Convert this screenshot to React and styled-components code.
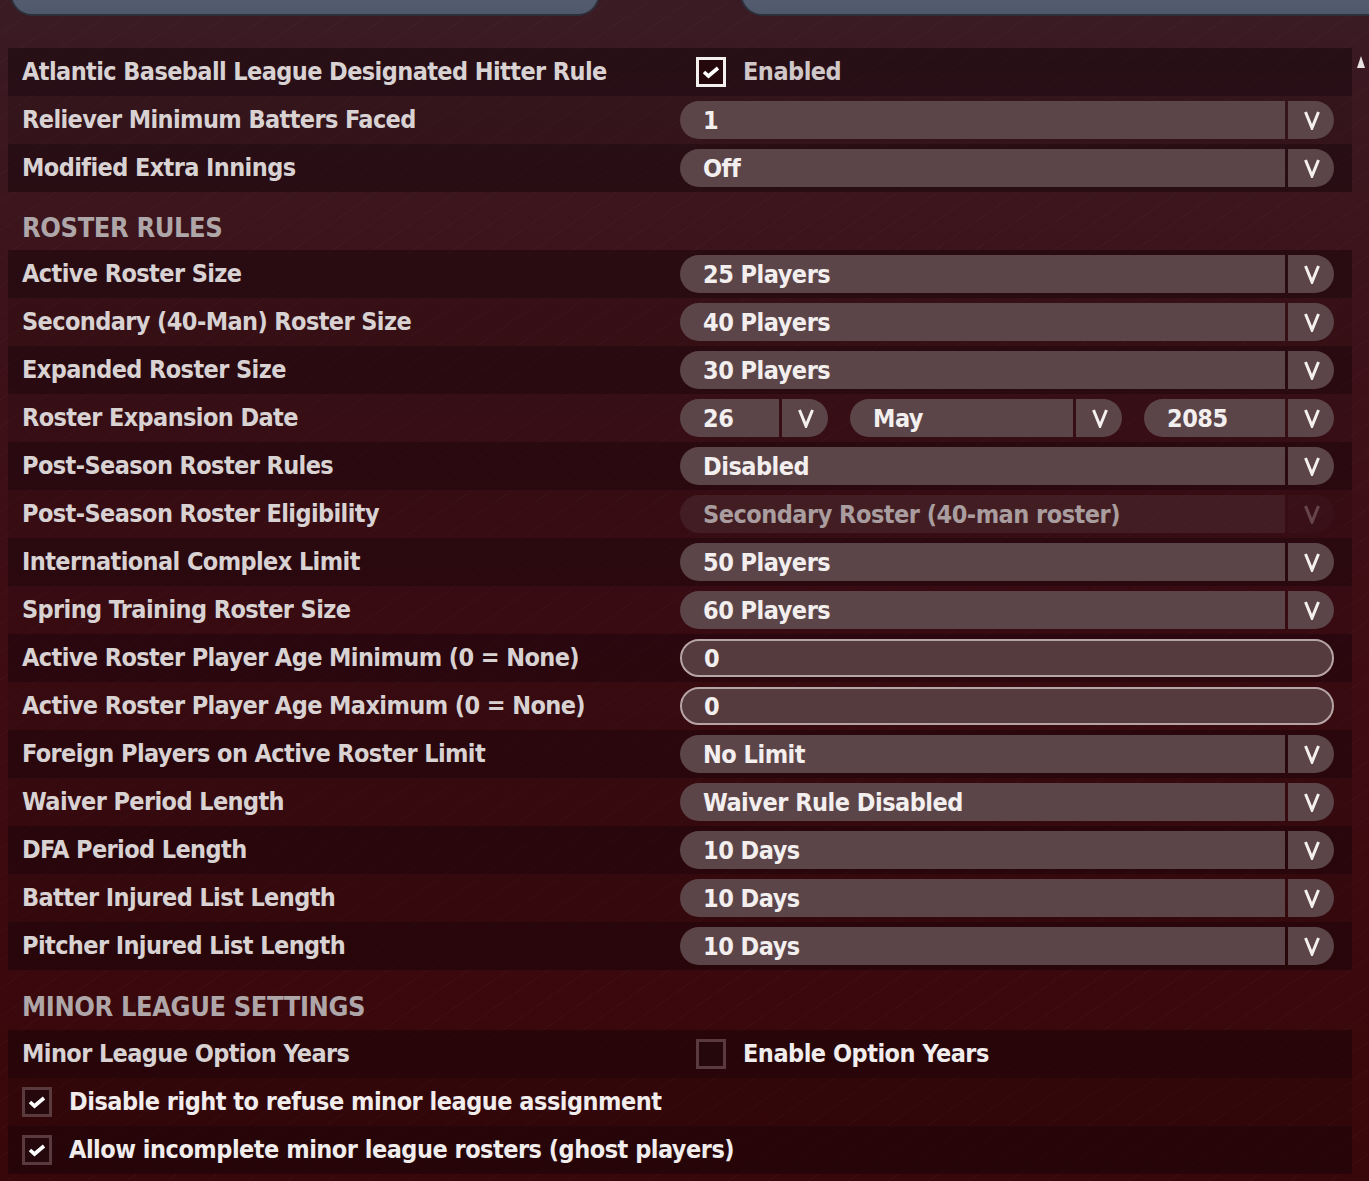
import React from 'react';
import styled, { createGlobalStyle } from 'styled-components';

const GlobalStyle = createGlobalStyle`
  html, body {
    margin: 0;
    padding: 0;
    background: #3a0c12;
  }
  body {
    font-family: "DejaVu Sans Condensed", "DejaVu Sans", "Liberation Sans", sans-serif;
    overflow: hidden;
  }
`;

const Page = styled.div`
  width: 1369px;
  height: 1181px;
  overflow: hidden;
  display: flex;
  flex-direction: column;
  background:
    repeating-linear-gradient(-35deg, rgba(255, 255, 255, 0) 0 22px, rgba(255, 255, 255, 0.018) 22px 23px),
    linear-gradient(180deg, #3a1b24 0%, #3d121a 25%, #3e0c13 55%, #380709 100%);
`;

const TabStrip = styled.div`
  height: 16px;
  display: flex;
  align-items: flex-end;
  overflow: hidden;
  flex-shrink: 0;
`;

const Tab = styled.div`
  height: 60px;
  margin-left: ${p => p.$left}px;
  width: ${p => p.$width}px;
  background: linear-gradient(180deg, #5b6679 0%, #4f596b 100%);
  border: 2px solid #2d2f3a;
  border-top: none;
  border-radius: 0 0 22px 22px;
  box-sizing: border-box;
  flex-shrink: 0;
`;

const Body = styled.div`
  display: flex;
  padding-top: 32px;
`;

const List = styled.div`
  width: 1352px;
  display: flex;
  flex-direction: column;
`;

const Scroll = styled.div`
  flex: 1;
  display: flex;
  justify-content: center;
  padding-top: 8px;
`;

const ScrollArrow = styled.div`
  width: 0;
  height: 0;
  border-left: 4px solid transparent;
  border-right: 4px solid transparent;
  border-bottom: 12px solid #e8e2e2;
`;

const Row = styled.div`
  height: 48px;
  margin-left: 8px;
  padding-left: 14px;
  display: grid;
  grid-template-columns: ${p => (p.$full ? '1fr' : '658px 654px')};
  align-items: center;
  background: ${p => (p.$dark ? 'rgba(15, 2, 6, 0.42)' : 'rgba(20, 4, 8, 0.16)')};
`;

const Label = styled.div`
  color: #d9d2d3;
  font-size: 25px;
  font-weight: 700;
  white-space: nowrap;
  letter-spacing: -0.6px;
  padding-bottom: 2px;
`;

const Header = styled.div`
  height: ${p => p.$h}px;
  padding-left: 22px;
  padding-top: 12px;
  box-sizing: border-box;
  display: flex;
  align-items: center;
  color: #aea6a8;
  font-size: 27px;
  font-weight: 700;
  letter-spacing: -0.4px;
`;

const Controls = styled.div`
  display: flex;
  gap: ${p => p.$gap || 0}px;
  height: 38px;
`;

const Select = styled.div`
  display: flex;
  height: 38px;
  width: ${p => (p.$w ? `${p.$w}px` : '100%')};
`;

const SelectValue = styled.div`
  flex: 1;
  display: flex;
  align-items: center;
  padding-left: ${p => p.$pad || 23}px;
  background: ${p => (p.$disabled ? 'rgba(92, 69, 73, 0.3)' : '#5c4549')};
  border-radius: 19px 0 0 19px;
  color: ${p => (p.$disabled ? '#a99d9f' : '#f3efef')};
  font-size: 25px;
  font-weight: 700;
  letter-spacing: -0.5px;
  box-sizing: border-box;
`;

const SelectButton = styled.div`
  width: 46px;
  margin-left: 3px;
  display: flex;
  align-items: center;
  justify-content: center;
  padding-left: 2px;
  box-sizing: border-box;
  background: ${p => (p.$disabled ? 'rgba(92, 69, 73, 0.3)' : '#5c4549')};
  border-radius: 0 19px 19px 0;
  opacity: ${p => (p.$disabled ? 0.25 : 1)};
`;

const TextInput = styled.div`
  height: 38px;
  width: 100%;
  box-sizing: border-box;
  border: 2px solid #b7a5a6;
  border-radius: 19px;
  background: #553a3e;
  display: flex;
  align-items: center;
  padding-left: 22px;
  color: #f3efef;
  font-size: 25px;
  font-weight: 700;
`;

const CheckWrap = styled.div`
  display: flex;
  align-items: center;
  gap: 17px;
  padding-left: ${p => p.$pad || 0}px;
`;

const Box = styled.div`
  width: 30px;
  height: 30px;
  box-sizing: border-box;
  border: 3px solid ${p => p.$color};
  background: #24080c;
  display: flex;
  align-items: center;
  justify-content: center;
`;

const CheckText = styled.span`
  color: ${p => p.$color || '#f1eded'};
  font-size: 25px;
  font-weight: 700;
  letter-spacing: -0.5px;
  padding-bottom: 1px;
  white-space: nowrap;
`;

const Chevron = () => (
  <svg width="18" height="20" viewBox="0 0 18 20">
    <path d="M2.5 2 L9 18 L15.5 2" fill="none" stroke="#f4f0f0" strokeWidth="3" strokeLinejoin="miter" />
  </svg>
);

const Tick = () => (
  <svg width="18" height="14" viewBox="0 0 18 14">
    <path d="M2 7 L6.5 11 L16 3" fill="none" stroke="#ffffff" strokeWidth="3.6" />
  </svg>
);

function Dropdown({ value, width, pad, disabled }) {
  return (
    <Select $w={width}>
      <SelectValue $pad={pad} $disabled={disabled}>{value}</SelectValue>
      <SelectButton $disabled={disabled}><Chevron /></SelectButton>
    </Select>
  );
}

function Check({ checked, bright, label, textColor, pad }) {
  return (
    <CheckWrap $pad={pad}>
      <Box $color={bright ? '#f4f0f0' : '#5b3a3d'}>{checked && <Tick />}</Box>
      <CheckText $color={textColor}>{label}</CheckText>
    </CheckWrap>
  );
}

const rosterRows = [
  ['Active Roster Size', '25 Players'],
  ['Secondary (40-Man) Roster Size', '40 Players'],
  ['Expanded Roster Size', '30 Players'],
  ['Roster Expansion Date', 'date'],
  ['Post-Season Roster Rules', 'Disabled'],
  ['Post-Season Roster Eligibility', 'Secondary Roster (40-man roster)', 'disabled'],
  ['International Complex Limit', '50 Players'],
  ['Spring Training Roster Size', '60 Players'],
  ['Active Roster Player Age Minimum (0 = None)', '0', 'input'],
  ['Active Roster Player Age Maximum (0 = None)', '0', 'input'],
  ['Foreign Players on Active Roster Limit', 'No Limit'],
  ['Waiver Period Length', 'Waiver Rule Disabled'],
  ['DFA Period Length', '10 Days'],
  ['Batter Injured List Length', '10 Days'],
  ['Pitcher Injured List Length', '10 Days'],
];

function renderControl(value, kind) {
  if (kind === 'input') return <TextInput>{value}</TextInput>;
  if (kind === 'disabled') return <Dropdown value={value} disabled />;
  if (value === 'date') {
    return (
      <Controls $gap={22}>
        <Dropdown value="26" width={148} />
        <Dropdown value="May" width={272} />
        <Dropdown value="2085" width={190} />
      </Controls>
    );
  }
  return <Dropdown value={value} />;
}

export default function App() {
  return (
    <Page>
      <GlobalStyle />
      <TabStrip>
        <Tab $left={10} $width={590} />
        <Tab $left={140} $width={660} />
      </TabStrip>
      <Body>
        <List>
          <Row $dark>
            <Label>Atlantic Baseball League Designated Hitter Rule</Label>
            <Check checked bright pad={16} label="Enabled" textColor="#cfc7c8" />
          </Row>
          <Row>
            <Label>Reliever Minimum Batters Faced</Label>
            <Dropdown value="1" />
          </Row>
          <Row $dark>
            <Label>Modified Extra Innings</Label>
            <Dropdown value="Off" />
          </Row>

          <Header $h={58}>ROSTER RULES</Header>
          {rosterRows.map(([label, value, kind], i) => (
            <Row key={label} $dark={i % 2 === 0}>
              <Label>{label}</Label>
              {renderControl(value, kind)}
            </Row>
          ))}

          <Header $h={60}>MINOR LEAGUE SETTINGS</Header>
          <Row $dark>
            <Label>Minor League Option Years</Label>
            <Check pad={16} label="Enable Option Years" />
          </Row>
          <Row $full>
            <Check checked label="Disable right to refuse minor league assignment" />
          </Row>
          <Row $dark $full>
            <Check checked label="Allow incomplete minor league rosters (ghost players)" />
          </Row>
        </List>
        <Scroll><ScrollArrow /></Scroll>
      </Body>
    </Page>
  );
}
